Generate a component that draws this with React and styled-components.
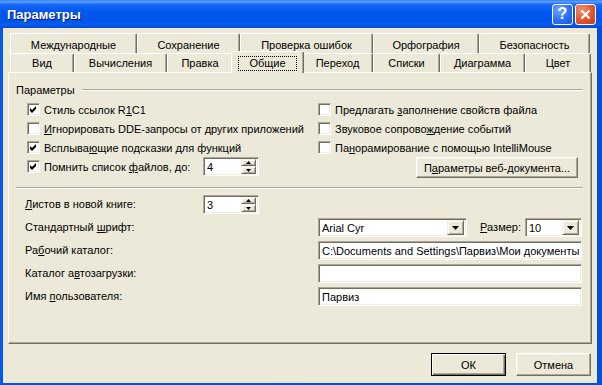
import React from "react";
import styled, { createGlobalStyle } from "styled-components";

const GlobalStyle = createGlobalStyle`
  html, body { margin: 0; padding: 0; background: #0055e5; }
  body { font-family: "Liberation Sans", Arial, sans-serif; font-size: 11px; color: #000; }
  * { box-sizing: border-box; }
`;

const Window = styled.div`
  width: 602px;
  height: 385px;
  display: flex;
  flex-direction: column;
  background: linear-gradient(90deg, #0a5ae8 0, #0055e5 3px, #0050e0 100%);
  overflow: hidden;
`;

const TitleBar = styled.div`
  height: 28px;
  flex: none;
  display: flex;
  align-items: center;
  padding: 0 6px 0 7px;
  background: linear-gradient(180deg, #2f7cf7 0%, #5aa0ff 6%, #1a68f5 16%, #0058ee 40%, #0055e8 75%, #0a5cf0 88%, #0047d8 100%);
`;

const Title = styled.div`
  flex: 1;
  color: #fff;
  font: bold 13px "Liberation Sans", Arial, sans-serif;
  text-shadow: 1px 1px #0a1883;
  padding-top: 1px;
`;

const CaptionButton = styled.div`
  width: 21px;
  height: 21px;
  margin-left: 2px;
  border: 1px solid #fff;
  border-radius: 3px;
  display: flex;
  align-items: center;
  justify-content: center;
  color: #fff;
  font: bold 16px "Liberation Sans", Arial, sans-serif;
  background: ${p => p.$close
    ? "radial-gradient(circle at 30% 25%, #f2916d 0%, #e0542b 55%, #c7421d 100%)"
    : "radial-gradient(circle at 30% 25%, #6fa6ff 0%, #2e6ff2 55%, #1d55d8 100%)"};
`;

const Body = styled.div`
  flex: 1;
  display: flex;
  flex-direction: column;
  margin: 0 5px 2px 3px;
  padding: 5px 5px 0 5px;
  background: #ece9d8;
`;

const TabRow = styled.div`
  display: flex;
  height: ${p => p.$h}px;
  padding-left: 2px;
  position: relative;
`;

const Tab = styled.div`
  width: ${p => p.$w}px;
  flex: none;
  display: flex;
  align-items: center;
  justify-content: center;
  background: #ece9d8;
  border-top: 1px solid #fff;
  border-left: 1px solid #fff;
  border-right: 1px solid #716f64;
  border-radius: 2px 2px 0 0;
  box-shadow: inset -1px 0 #aca899;
  padding-top: ${p => p.$row === 1 ? 2 : 0}px;
  white-space: nowrap;
  ${p => p.$active && `
    width: ${p.$w + 4}px;
    margin: -2px -2px -1px;
    position: relative;
    z-index: 1;
    padding-top: 1px;
  `}
`;

const Focus = styled.span`
  border: 1px dotted #000;
  padding: 0 10px 1px;
  line-height: 12px;
`;

const Panel = styled.div`
  flex: none;
  height: 272px;
  display: flex;
  flex-direction: column;
  padding: 10px 8px 0 7px;
  border-top: 1px solid #fff;
  border-left: 1px solid #fff;
  border-right: 1px solid #716f64;
  border-bottom: 1px solid #716f64;
  box-shadow: inset -1px -1px #aca899;
`;

const GroupHeader = styled.div`
  display: flex;
  align-items: center;
  height: 13px;
  gap: 7px;
`;

const Etched = styled.div`
  flex: 1;
  height: 2px;
  border-top: 1px solid #aca899;
  border-bottom: 1px solid #fff;
`;

const Separator = styled.div`
  height: 2px;
  margin: ${p => p.$top}px 0 0 0;
  border-top: 1px solid #aca899;
  border-bottom: 1px solid #fff;
`;

const CheckGrid = styled.div`
  display: grid;
  grid-template-columns: 291px minmax(0, 1fr);
  grid-auto-rows: 19px;
  margin-top: 4px;
  padding: 0 1px 0 11px;
  align-items: center;
`;

const CheckLabel = styled.label`
  display: flex;
  align-items: center;
  gap: 4px;
  white-space: nowrap;
  width: ${p => p.$w ? `${p.$w}px` : "auto"};
`;

const Box = styled.span`
  width: 13px;
  height: 13px;
  flex: none;
  display: flex;
  align-items: center;
  justify-content: center;
  background: #fff;
  border: 1px solid;
  border-color: #aca899 #fff #fff #aca899;
  box-shadow: inset 1px 1px #716f64, inset -1px -1px #f1efe2;
`;

const Key = styled.span`
  text-decoration: underline;
  text-underline-offset: 1px;
`;

const Inline = styled.div`
  display: flex;
  align-items: center;
`;

const Field = styled.div`
  width: ${p => p.$w ? `${p.$w}px` : "auto"};
  flex: ${p => p.$w ? "none" : "1"};
  min-width: 0;
  height: ${p => p.$h || 19}px;
  display: flex;
  align-items: center;
  background: #fff;
  border: 1px solid;
  border-color: #aca899 #fff #fff #aca899;
  box-shadow: inset 1px 1px #716f64, inset -1px -1px #f1efe2;
  padding: 0 2px 0 3px;
  white-space: nowrap;
  overflow: hidden;
`;

const WideField = styled(Field)`
  grid-column: 3;
`;

const FieldText = styled.span`
  flex: 1;
`;

const Raised = styled.span`
  display: flex;
  align-items: center;
  justify-content: center;
  flex: none;
  width: ${p => p.$w}px;
  height: ${p => p.$h}px;
  background: #ece9d8;
  border: 1px solid;
  border-color: #f1efe2 #716f64 #716f64 #f1efe2;
  box-shadow: inset 1px 1px #fff, inset -1px -1px #aca899;
`;

const SpinStack = styled.span`
  display: flex;
  flex-direction: column;
`;

const PushButton = styled.button`
  width: ${p => p.$w}px;
  height: ${p => p.$h || 23}px;
  font: 11px "Liberation Sans", Arial, sans-serif;
  color: #000;
  background: #ece9d8;
  padding: 0;
  border: 1px solid;
  border-color: ${p => p.$default ? "#000" : "#fff #716f64 #716f64 #fff"};
  box-shadow: ${p => p.$default
    ? "inset 1px 1px #fff, inset -1px -1px #716f64, inset -2px -2px #aca899"
    : "inset -1px -1px #aca899, inset 1px 1px #f1efe2"};
`;

const WebCell = styled.div`
  justify-self: end;
  margin-right: 4px;
  margin-top: 2px;
`;

const FormGrid = styled.div`
  display: grid;
  grid-template-columns: 178px 115px minmax(0, 1fr);
  grid-auto-rows: 19px;
  row-gap: 4px;
  margin-top: 6px;
  padding: 0 1px 0 9px;
  align-items: center;
`;

const FormLabel = styled.div`
  grid-column: ${p => p.$span ? "1 / 3" : "1 / 2"};
  padding-bottom: 2px;
  white-space: nowrap;
`;

const FontRow = styled.div`
  grid-column: 3;
  display: flex;
  align-items: center;
`;

const SizeLabel = styled.span`
  margin: 0 4px 0 auto;
  padding-bottom: 1px;
`;

const ButtonBar = styled.div`
  flex: 1;
  display: flex;
  justify-content: flex-end;
  align-items: flex-start;
  gap: 10px;
  padding: 9px 1px 0 0;
`;

function Check() {
  return (
    <svg width="7" height="7" viewBox="0 0 7 7">
      <path d="M0 2 L2 4 L6 0 L6 3 L2 7 L0 5 Z" fill="#000" />
    </svg>
  );
}

function Arrow({ up, size = 7 }) {
  const h = Math.ceil(size / 2);
  return (
    <svg width={size} height={h} viewBox={`0 0 ${size} ${h}`}>
      <path d={up ? `M0 ${h} L${size / 2} 0 L${size} ${h} Z` : `M0 0 L${size} 0 L${size / 2} ${h} Z`} fill="#000" />
    </svg>
  );
}

function CheckBox({ checked, children, w }) {
  return (
    <CheckLabel $w={w}>
      <Box>{checked && <Check />}</Box>
      <span>{children}</span>
    </CheckLabel>
  );
}

function Spin({ value }) {
  return (
    <Field $w={56} $h={19}>
      <FieldText>{value}</FieldText>
      <SpinStack>
        <Raised $w={15} $h={7}><Arrow up size={5} /></Raised>
        <Raised $w={15} $h={8}><Arrow size={5} /></Raised>
      </SpinStack>
    </Field>
  );
}

function Combo({ value, w }) {
  return (
    <Field $w={w} $h={19}>
      <FieldText>{value}</FieldText>
      <Raised $w={17} $h={15}><Arrow size={7} /></Raised>
    </Field>
  );
}

const backTabs = [
  ["Международные", 127],
  ["Сохранение", 103],
  ["Проверка ошибок", 133],
  ["Орфография", 106],
  ["Безопасность", 111],
];

const frontTabs = [
  ["Вид", 64],
  ["Вычисления", 93],
  ["Правка", 66],
  ["Общие", 69, true],
  ["Переход", 71],
  ["Списки", 67],
  ["Диаграмма", 85],
  ["Цвет", 66],
];

export default function App() {
  return (
    <Window>
      <GlobalStyle />
      <TitleBar>
        <Title>Параметры</Title>
        <CaptionButton>?</CaptionButton>
        <CaptionButton $close>
          <svg width="11" height="11" viewBox="0 0 11 11">
            <path d="M1.5 1.5 L9.5 9.5 M9.5 1.5 L1.5 9.5" stroke="#fff" strokeWidth="2.2" />
          </svg>
        </CaptionButton>
      </TitleBar>
      <Body>
        <TabRow $h={20}>
          {backTabs.map(([t, w]) => (
            <Tab key={t} $w={w} $row={1}>{t}</Tab>
          ))}
        </TabRow>
        <TabRow $h={19}>
          {frontTabs.map(([t, w, active]) => (
            <Tab key={t} $w={w} $row={2} $active={active}>
              {active ? <Focus>{t}</Focus> : t}
            </Tab>
          ))}
        </TabRow>
        <Panel>
          <GroupHeader>
            <span>Параметры</span>
            <Etched />
          </GroupHeader>
          <CheckGrid>
            <CheckBox checked>Стиль ссылок R<Key>1</Key>C1</CheckBox>
            <CheckBox>Предлагать <Key>з</Key>аполнение свойств файла</CheckBox>
            <CheckBox><Key>И</Key>гнорировать DDE-запросы от других приложений</CheckBox>
            <CheckBox>Звуковое сопрово<Key>ж</Key>дение событий</CheckBox>
            <CheckBox checked>Всплыва<Key>ю</Key>щие подсказки для функций</CheckBox>
            <CheckBox>Па<Key>н</Key>орамирование с помощью IntelliMouse</CheckBox>
            <Inline>
              <CheckBox checked w={176}>Помнить список <Key>ф</Key>айлов, до:</CheckBox>
              <Spin value="4" />
            </Inline>
            <WebCell>
              <PushButton $w={162} $h={21}>П<Key>а</Key>раметры веб-документа...</PushButton>
            </WebCell>
          </CheckGrid>
          <Separator $top={11} />
          <FormGrid>
            <FormLabel><Key>Л</Key>истов в новой книге:</FormLabel>
            <Spin value="3" />
            <span />
            <FormLabel $span>Стандартный <Key>ш</Key>рифт:</FormLabel>
            <FontRow>
              <Combo value="Arial Cyr" w={149} />
              <SizeLabel><Key>Р</Key>азмер:</SizeLabel>
              <Combo value="10" w={57} />
            </FontRow>
            <FormLabel $span>Ра<Key>б</Key>очий каталог:</FormLabel>
            <WideField>C:\Documents and Settings\Парвиз\Мои документы</WideField>
            <FormLabel $span>Каталог а<Key>в</Key>тозагрузки:</FormLabel>
            <WideField />
            <FormLabel $span>Имя <Key>п</Key>ользователя:</FormLabel>
            <WideField>Парвиз</WideField>
          </FormGrid>
        </Panel>
        <ButtonBar>
          <PushButton $w={75} $default>ОК</PushButton>
          <PushButton $w={75}>Отмена</PushButton>
        </ButtonBar>
      </Body>
    </Window>
  );
}
